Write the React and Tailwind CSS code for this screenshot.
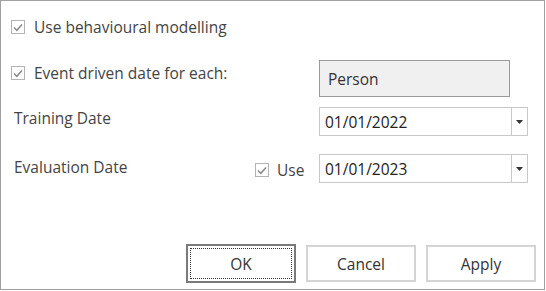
function Check() {
  return (
    <span className="flex h-[14px] w-[14px] shrink-0 items-center justify-center border border-[#b4b4b4] bg-white">
      <svg width="10" height="9" viewBox="0 0 10 9">
        <path d="M1 4.5 L3.8 7.3 L9 1.5" fill="none" stroke="#8a8a8a" strokeWidth="1.5" />
      </svg>
    </span>
  );
}

function DateBox({ value }) {
  return (
    <div className="flex h-[29px] w-[209px] border border-[#c8c8c8] bg-white">
      <div className="flex flex-1 items-center pl-[5px] text-[#222]">{value}</div>
      <div className="flex w-[16px] items-center justify-center border-l border-[#c8c8c8]">
        <svg width="7" height="4" viewBox="0 0 7 4">
          <path d="M0 0 H7 L3.5 4 Z" fill="#333" />
        </svg>
      </div>
    </div>
  );
}

function Button({ children, focused }) {
  return (
    <button
      className={
        focused
          ? 'flex h-[39px] w-[110px] items-center justify-center border-2 border-[#7a7a7a] bg-white p-[2px] text-[#333]'
          : 'flex h-[37px] w-[110px] items-center justify-center border-2 border-[#d4d4d4] bg-white text-[#333]'
      }
    >
      {focused ? (
        <span className="flex h-full w-full items-center justify-center border border-dotted border-[#333]">{children}</span>
      ) : (
        children
      )}
    </button>
  );
}

export default function App() {
  return (
    <div className="h-[291px] w-[546px] bg-white font-['Open_Sans',sans-serif] text-[15.5px] leading-[20px] text-[#444]">
      <div className="flex h-[290px] w-[545px] flex-col border border-[#a0a0a0] pl-[10px] pt-[16px]">
        <div className="flex h-[20px] items-center gap-[9px]">
          <Check />
          <span>Use behavioural modelling</span>
        </div>

        <div className="mt-[23px] flex items-start">
          <div className="mt-[3px] flex h-[20px] w-[308px] items-center gap-[9px]">
            <Check />
            <span>Event driven date for each:</span>
          </div>
          <div className="flex h-[37px] w-[191px] items-center border border-[#9a9a9a] bg-[#f0f0f0] pl-[8px] text-[#333]">
            Person
          </div>
        </div>

        <div className="mt-[10px] flex items-start">
          <span className="mt-[1px] w-[308px] pl-[3px]">Training Date</span>
          <DateBox value="01/01/2022" />
        </div>

        <div className="mt-[18px] flex items-start">
          <span className="mt-[3px] w-[244px] pl-[3px]">Evaluation Date</span>
          <div className="mt-[6px] flex h-[20px] w-[64px] items-center gap-[8px]">
            <Check />
            <span>Use</span>
          </div>
          <DateBox value="01/01/2023" />
        </div>

        <div className="mt-auto mb-[6px] flex items-center justify-end gap-[10px] pr-[8px]">
          <Button focused>OK</Button>
          <Button>Cancel</Button>
          <Button>Apply</Button>
        </div>
      </div>
    </div>
  );
}
